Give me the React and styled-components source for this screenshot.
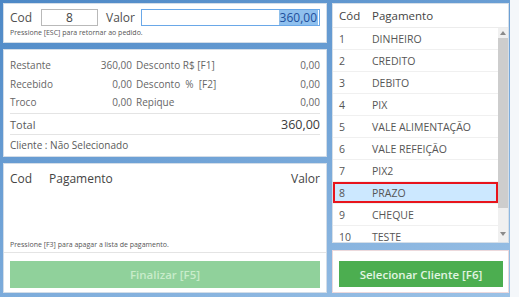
import React from "react";
import styled, { createGlobalStyle } from "styled-components";

const Global = createGlobalStyle`
  html, body { margin: 0; padding: 0; background: #f4f7fa; }
  body { font-family: "Open Sans", "Noto Sans", sans-serif; }
  * { box-sizing: border-box; }
`;

const Window = styled.div`
  width: 510px;
  height: 297px;
  padding: 3px 1px 4px 3px;
  background: linear-gradient(160deg, #4d88c6 0%, #6fa2d6 45%, #9cc2e6 100%);
  display: grid;
  grid-template-columns: 324px 177px;
  column-gap: 5px;
  overflow: hidden;
`;

const Column = styled.div`
  display: flex;
  flex-direction: column;
  gap: ${(p) => p.$gap}px;
  min-height: 0;
`;

const Panel = styled.div`
  background: #fff;
  border: 1px solid ${(p) => p.$border || "#d3dde8"};
  height: ${(p) => p.$h}px;
  flex: none;
  display: flex;
  flex-direction: column;
  overflow: hidden;
`;

/* ---------- top panel ---------- */
const InputRow = styled.div`
  display: flex;
  align-items: center;
  padding: 4px 6px 0 6px;
  height: 22px;
`;

const FieldLabel = styled.span`
  width: ${(p) => p.$w}px;
  margin-left: ${(p) => p.$ml || 0}px;
  font-size: 12px;
  color: #505050;
  line-height: 17px;
`;

const TextBox = styled.div`
  width: ${(p) => p.$w}px;
  height: 17px;
  border: 1px solid ${(p) => (p.$focus ? "#6aa8e8" : "#b9b9b9")};
  display: flex;
  align-items: center;
  justify-content: ${(p) => p.$align};
  padding: 0 1px;
  font-size: 12px;
  color: #444;
`;

const Selected = styled.span`
  background: #8fc0ee;
  color: #1d4f9c;
  line-height: 15px;
  padding: 0 1px;
`;

const Hint = styled.div`
  font-size: 7px;
  color: #555;
  padding: ${(p) => p.$pad};
  line-height: ${(p) => p.$lh}px;
  white-space: nowrap;
`;

/* ---------- totals panel ---------- */
const TotalsGrid = styled.div`
  display: grid;
  grid-template-columns: 59px 63px 1fr auto;
  grid-auto-rows: 18.5px;
  align-items: center;
  padding: 6px 6px 0 6px;
  font-size: 10px;
  color: #666;
`;

const Cell = styled.span`
  text-align: ${(p) => p.$align || "left"};
  padding-left: ${(p) => p.$pl || 0}px;
  white-space: pre;
`;

const Divider = styled.div`
  height: 1px;
  background: #e4e4e4;
  margin: ${(p) => p.$m || "0"};
`;

const TotalRow = styled.div`
  display: flex;
  justify-content: space-between;
  align-items: center;
  height: 19px;
  padding: 0 6px;
  margin-top: 1px;
`;

const TotalLabel = styled.span`
  font-size: 11px;
  color: #5a5a5a;
`;

const TotalValue = styled.span`
  font-size: 12.5px;
  color: #3a3a3a;
`;

const ClientRow = styled.div`
  flex: 1;
  display: flex;
  align-items: center;
  padding: 0 6px;
  font-size: 10px;
  color: #5a5a5a;
`;

/* ---------- payments panel ---------- */
const PayHeader = styled.div`
  display: flex;
  align-items: center;
  padding: 7px 6px 0 6px;
  height: 22px;
  font-size: 12px;
  color: #444;
`;

const HeadCell = styled.span`
  width: ${(p) => (p.$w ? `${p.$w}px` : "auto")};
  flex: ${(p) => (p.$grow ? 1 : "none")};
  text-align: ${(p) => p.$align || "left"};
`;

const Spacer = styled.div`
  flex: 1;
`;

const ButtonArea = styled.div`
  padding: ${(p) => p.$pad};
`;

const ActionButton = styled.div`
  height: ${(p) => p.$h}px;
  background: ${(p) => (p.$disabled ? "#90d19b" : "#4cae50")};
  color: ${(p) => (p.$disabled ? "#c8ecca" : "#e2f5e2")};
  display: flex;
  align-items: center;
  justify-content: center;
  font-size: 11.5px;
  font-weight: 600;
`;

/* ---------- list panel ---------- */
const ListHeader = styled.div`
  display: flex;
  align-items: center;
  height: 24px;
  padding-left: 6px;
  font-size: 11.5px;
  color: #444;
  border-bottom: 1px solid #ececec;
  flex: none;
`;

const ListBody = styled.div`
  flex: 1;
  display: flex;
  min-height: 0;
`;

const Rows = styled.div`
  flex: 1;
  overflow: hidden;
`;

const Row = styled.div`
  display: flex;
  align-items: center;
  height: 22px;
  padding-left: 6px;
  font-size: 10.5px;
  color: #555;
  border-bottom: 1px solid #f0f0f0;
  background: ${(p) => (p.$sel ? "#cce8ff" : "transparent")};
  box-shadow: ${(p) => (p.$sel ? "inset 0 0 0 2px #e8141c" : "none")};
`;

const CodeCell = styled.span`
  width: 33px;
  flex: none;
`;

const Scrollbar = styled.div`
  width: 10px;
  flex: none;
  background: #f0f0f0;
  display: flex;
  flex-direction: column;
`;

const Arrow = styled.div`
  height: 10px;
  display: flex;
  align-items: center;
  justify-content: center;
  flex: none;
`;

const Thumb = styled.div`
  height: 170px;
  background: #cdcdcd;
  flex: none;
`;

const payments = [
  ["1", "DINHEIRO"],
  ["2", "CREDITO"],
  ["3", "DEBITO"],
  ["4", "PIX"],
  ["5", "VALE ALIMENTAÇÃO"],
  ["6", "VALE REFEIÇÃO"],
  ["7", "PIX2"],
  ["8", "PRAZO"],
  ["9", "CHEQUE"],
  ["10", "TESTE"],
];

const Caret = ({ down }) => (
  <svg width="6" height="4" viewBox="0 0 6 4">
    <path d={down ? "M0 0 L6 0 L3 4 Z" : "M0 4 L6 4 L3 0 Z"} fill="#8a8a8a" />
  </svg>
);

export default function App() {
  return (
    <>
      <Global />
      <Window>
        <Column $gap={6}>
          <Panel $h={40}>
            <InputRow>
              <FieldLabel $w={31}>Cod</FieldLabel>
              <TextBox $w={57} $align="center">8</TextBox>
              <FieldLabel $w={35} $ml={8}>Valor</FieldLabel>
              <TextBox $w={179} $align="flex-end" $focus>
                <Selected>360,00</Selected>
              </TextBox>
            </InputRow>
            <Hint $pad="1px 6px 0 6px" $lh={12}>
              Pressione [ESC] para retornar ao pedido.
            </Hint>
          </Panel>

          <Panel $h={108}>
            <TotalsGrid>
              <Cell>Restante</Cell>
              <Cell $align="right">360,00</Cell>
              <Cell $pl={4}>Desconto R$ [F1]</Cell>
              <Cell $align="right">0,00</Cell>
              <Cell>Recebido</Cell>
              <Cell $align="right">0,00</Cell>
              <Cell $pl={4}>{"Desconto  %  [F2]"}</Cell>
              <Cell $align="right">0,00</Cell>
              <Cell>Troco</Cell>
              <Cell $align="right">0,00</Cell>
              <Cell $pl={4}>Repique</Cell>
              <Cell $align="right">0,00</Cell>
            </TotalsGrid>
            <Divider $m="1px 6px 0 6px" />
            <TotalRow>
              <TotalLabel>Total</TotalLabel>
              <TotalValue>360,00</TotalValue>
            </TotalRow>
            <Divider $m="0 6px" />
            <ClientRow>Cliente : Não Selecionado</ClientRow>
          </Panel>

          <Panel $h={130}>
            <PayHeader>
              <HeadCell $w={39}>Cod</HeadCell>
              <HeadCell $grow>Pagamento</HeadCell>
              <HeadCell $align="right">Valor</HeadCell>
            </PayHeader>
            <Spacer />
            <Hint $pad="0 6px" $lh={14}>
              Pressione [F3] para apagar a lista de pagamento.
            </Hint>
            <Divider />
            <ButtonArea $pad="8px 6px 4px 6px">
              <ActionButton $h={27} $disabled>
                Finalizar [F5]
              </ActionButton>
            </ButtonArea>
          </Panel>
        </Column>

        <Column $gap={7}>
          <Panel $h={240} $border="#d6dfe8">
            <ListHeader>
              <CodeCell>Cód</CodeCell>
              <span>Pagamento</span>
            </ListHeader>
            <ListBody>
              <Rows>
                {payments.map(([c, n]) => (
                  <Row key={c} $sel={c === "8"}>
                    <CodeCell>{c}</CodeCell>
                    <span>{n}</span>
                  </Row>
                ))}
              </Rows>
              <Scrollbar>
                <Arrow>
                  <Caret />
                </Arrow>
                <Thumb />
                <Spacer />
                <Arrow>
                  <Caret down />
                </Arrow>
                <div style={{ height: 3 }} />
              </Scrollbar>
            </ListBody>
          </Panel>
          <Panel $h={43} $border="#ecd9dc">
            <ButtonArea $pad="10px 5px 5px 6px">
              <ActionButton $h={26}>Selecionar Cliente [F6]</ActionButton>
            </ButtonArea>
          </Panel>
        </Column>
      </Window>
    </>
  );
}
